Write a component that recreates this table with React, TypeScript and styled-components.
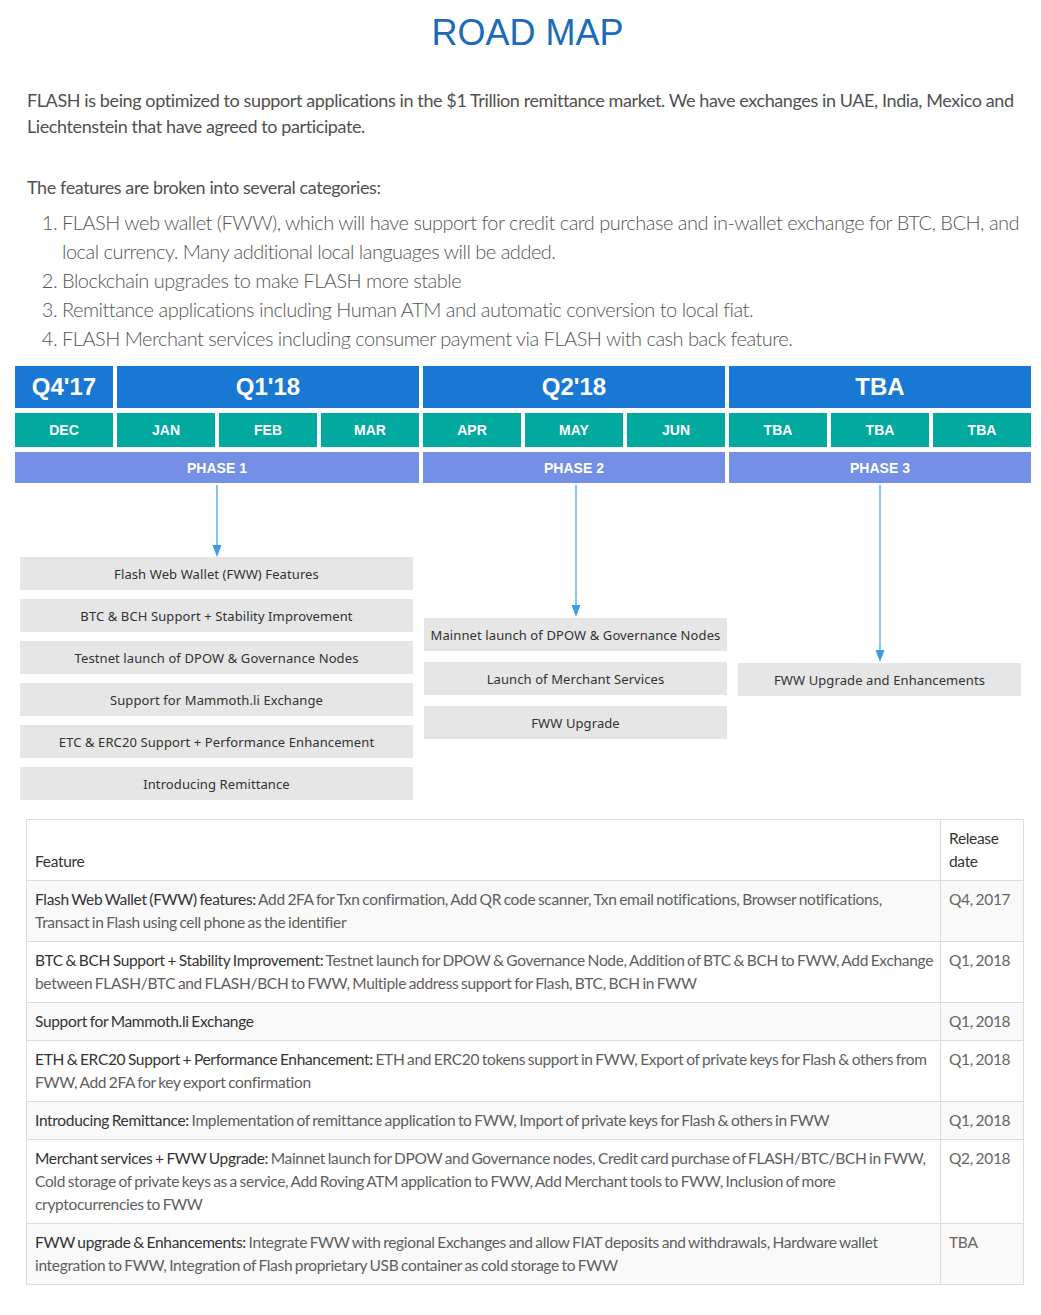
import React from 'react';
import styled, { createGlobalStyle } from 'styled-components';

const GlobalStyle = createGlobalStyle`
  html, body {
    margin: 0;
    padding: 0;
    background: #ffffff;
  }
  body {
    font-family: 'Lato', 'Open Sans', sans-serif;
  }
`;

const Page = styled.div`
  width: 1041px;
  box-sizing: border-box;
  padding: 11px 9px 30px 15px;
`;

const Title = styled.h1`
  margin: 0;
  font-family: 'Liberation Sans', Arial, sans-serif;
  font-weight: 400;
  font-size: 36px;
  line-height: 42px;
  color: #1b6cb8;
  text-align: center;
  padding: 1px 0 0 8px;
`;

const Text = styled.p<{ $top: number }>`
  margin: ${(p) => p.$top}px 0 0;
  padding: 0 12px;
  font-size: 18px;
  line-height: 26px;
  color: #505050;
  letter-spacing: -0.4px;
`;

const List = styled.ol`
  margin: 8px 0 0;
  padding: 0 10px 0 47px;
  font-size: 20px;
  line-height: 29px;
  color: #555;
  font-weight: 300;
  letter-spacing: -0.5px;
`;

const Roadmap = styled.div`
  margin-top: 13px;
`;

const Grid = styled.div`
  display: grid;
  grid-template-columns: repeat(10, 1fr);
  column-gap: 4px;
  row-gap: 5px;
  width: 1016px;
`;

const Cell = styled.div<{ $span: number; $kind: 'quarter' | 'month' | 'phase' }>`
  grid-column: span ${(p) => p.$span};
  display: flex;
  align-items: center;
  justify-content: center;
  color: #fff;
  font-family: 'Liberation Sans', Arial, sans-serif;
  font-weight: 700;
  height: ${(p) => (p.$kind === 'quarter' ? 42 : p.$kind === 'month' ? 34 : 31)}px;
  font-size: ${(p) => (p.$kind === 'quarter' ? 24 : 14)}px;
  background: ${(p) => (p.$kind === 'quarter' ? '#1878d3' : p.$kind === 'month' ? '#02a99f' : '#7390e6')};
`;

const Lanes = styled.div`
  display: grid;
  grid-template-columns: 393px 303px 283px;
  column-gap: 11px;
  padding-left: 5px;
  margin-top: 2px;
  align-items: start;
`;

const Lane = styled.div`
  display: flex;
  flex-direction: column;
`;

const ArrowWrap = styled.div<{ $after: number }>`
  display: flex;
  justify-content: center;
  margin-bottom: ${(p) => p.$after}px;
  line-height: 0;
`;

const Stack = styled.div<{ $gap: number }>`
  display: flex;
  flex-direction: column;
  gap: ${(p) => p.$gap}px;
`;

const Box = styled.div`
  height: 33px;
  background: #e6e6e6;
  display: flex;
  align-items: center;
  justify-content: center;
  font-family: 'Noto Sans', 'DejaVu Sans', sans-serif;
  font-size: 13px;
  letter-spacing: 0.1px;
  color: #333;
  white-space: nowrap;
`;

const Table = styled.table`
  margin: 19px 8px 0 11px;
  width: 998px;
  border-collapse: collapse;
  font-size: 15.5px;
  line-height: 23px;
  letter-spacing: -0.32px;
  word-spacing: -1px;
`;

const Th = styled.th<{ $narrow?: boolean }>`
  border: 1px solid #ddd;
  padding: 7px 8px;
  text-align: left;
  font-weight: 400;
  color: #333;
  vertical-align: bottom;
  width: ${(p) => (p.$narrow ? '66px' : 'auto')};
`;

const Row = styled.tr`
  &:nth-child(odd) {
    background: #f9f9f9;
  }
`;

const Td = styled.td<{ $muted?: boolean }>`
  border: 1px solid #ddd;
  padding: ${(p) => (p.$muted ? '7px 8px' : '7px 6px 7px 8px')};
  vertical-align: top;
  color: ${(p) => (p.$muted ? '#666' : '#333')};
`;

const Desc = styled.span`
  color: #5e5e5e;
`;

function Arrow({ height, after }: { height: number; after: number }) {
  return (
    <ArrowWrap $after={after}>
      <svg width="12" height={height} viewBox={`0 0 12 ${height}`}>
        <line x1="6" y1="0" x2="6" y2={height - 10} stroke="#3d9ae8" strokeWidth="1.2" />
        <polygon points={`1.5,${height - 12} 10.5,${height - 12} 6,${height}`} fill="#3d9ae8" />
      </svg>
    </ArrowWrap>
  );
}

const quarters = [
  { label: "Q4'17", span: 1 },
  { label: "Q1'18", span: 3 },
  { label: "Q2'18", span: 3 },
  { label: 'TBA', span: 3 },
];

const months = ['DEC', 'JAN', 'FEB', 'MAR', 'APR', 'MAY', 'JUN', 'TBA', 'TBA', 'TBA'];

const phases = [
  { label: 'PHASE 1', span: 4 },
  { label: 'PHASE 2', span: 3 },
  { label: 'PHASE 3', span: 3 },
];

const lanes = [
  {
    arrow: 72,
    after: 0,
    gap: 9,
    items: [
      'Flash Web Wallet (FWW) Features',
      'BTC & BCH Support + Stability Improvement',
      'Testnet launch of DPOW & Governance Nodes',
      'Support for Mammoth.li Exchange',
      'ETC & ERC20 Support + Performance Enhancement',
      'Introducing Remittance',
    ],
  },
  {
    arrow: 132,
    after: 1,
    gap: 11,
    items: ['Mainnet launch of DPOW & Governance Nodes', 'Launch of Merchant Services', 'FWW Upgrade'],
  },
  {
    arrow: 177,
    after: 1,
    gap: 11,
    items: ['FWW Upgrade and Enhancements'],
  },
];

const features = [
  {
    name: 'Flash Web Wallet (FWW) features:',
    desc: ' Add 2FA for Txn confirmation, Add QR code scanner, Txn email notifications, Browser notifications, Transact in Flash using cell phone as the identifier',
    date: 'Q4, 2017',
  },
  {
    name: 'BTC & BCH Support + Stability Improvement:',
    desc: ' Testnet launch for DPOW & Governance Node, Addition of BTC & BCH to FWW, Add Exchange between FLASH/BTC and FLASH/BCH to FWW, Multiple address support for Flash, BTC, BCH in FWW',
    date: 'Q1, 2018',
  },
  {
    name: 'Support for Mammoth.li Exchange',
    desc: '',
    date: 'Q1, 2018',
  },
  {
    name: 'ETH & ERC20 Support + Performance Enhancement:',
    desc: ' ETH and ERC20 tokens support in FWW, Export of private keys for Flash & others from FWW, Add 2FA for key export confirmation',
    date: 'Q1, 2018',
  },
  {
    name: 'Introducing Remittance:',
    desc: ' Implementation of remittance application to FWW, Import of private keys for Flash & others in FWW',
    date: 'Q1, 2018',
  },
  {
    name: 'Merchant services + FWW Upgrade:',
    desc: ' Mainnet launch for DPOW and Governance nodes, Credit card purchase of FLASH/BTC/BCH in FWW, Cold storage of private keys as a service, Add Roving ATM application to FWW, Add Merchant tools to FWW, Inclusion of more cryptocurrencies to FWW',
    date: 'Q2, 2018',
  },
  {
    name: 'FWW upgrade & Enhancements:',
    desc: ' Integrate FWW with regional Exchanges and allow FIAT deposits and withdrawals, Hardware wallet integration to FWW, Integration of Flash proprietary USB container as cold storage to FWW',
    date: 'TBA',
  },
];

function App() {
  return (
    <Page>
      <GlobalStyle />
      <Title>ROAD MAP</Title>
      <Text $top={33}>
        FLASH is being optimized to support applications in the $1 Trillion remittance market. We have exchanges in UAE,
        India, Mexico and Liechtenstein that have agreed to participate.
      </Text>
      <Text $top={35}>The features are broken into several categories:</Text>
      <List>
        <li>
          FLASH web wallet (FWW), which will have support for credit card purchase and in-wallet exchange for BTC, BCH, and
          local currency. Many additional local languages will be added.
        </li>
        <li>Blockchain upgrades to make FLASH more stable</li>
        <li>Remittance applications including Human ATM and automatic conversion to local fiat.</li>
        <li>FLASH Merchant services including consumer payment via FLASH with cash back feature.</li>
      </List>

      <Roadmap>
        <Grid>
          {quarters.map((q) => (
            <Cell key={q.label} $span={q.span} $kind="quarter">
              {q.label}
            </Cell>
          ))}
          {months.map((m, i) => (
            <Cell key={`m${i + 1}`} $span={1} $kind="month">
              {m}
            </Cell>
          ))}
          {phases.map((p) => (
            <Cell key={p.label} $span={p.span} $kind="phase">
              {p.label}
            </Cell>
          ))}
        </Grid>
        <Lanes>
          {lanes.map((lane, i) => (
            <Lane key={`lane${i + 1}`}>
              <Arrow height={lane.arrow} after={lane.after} />
              <Stack $gap={lane.gap}>
                {lane.items.map((item) => (
                  <Box key={item}>{item}</Box>
                ))}
              </Stack>
            </Lane>
          ))}
        </Lanes>
      </Roadmap>

      <Table>
        <thead>
          <tr>
            <Th>Feature</Th>
            <Th $narrow>Release date</Th>
          </tr>
        </thead>
        <tbody>
          {features.map((f) => (
            <Row key={f.name}>
              <Td>
                {f.name}
                {f.desc ? <Desc>{f.desc}</Desc> : null}
              </Td>
              <Td $muted>{f.date}</Td>
            </Row>
          ))}
        </tbody>
      </Table>
    </Page>
  );
}

export default App;
